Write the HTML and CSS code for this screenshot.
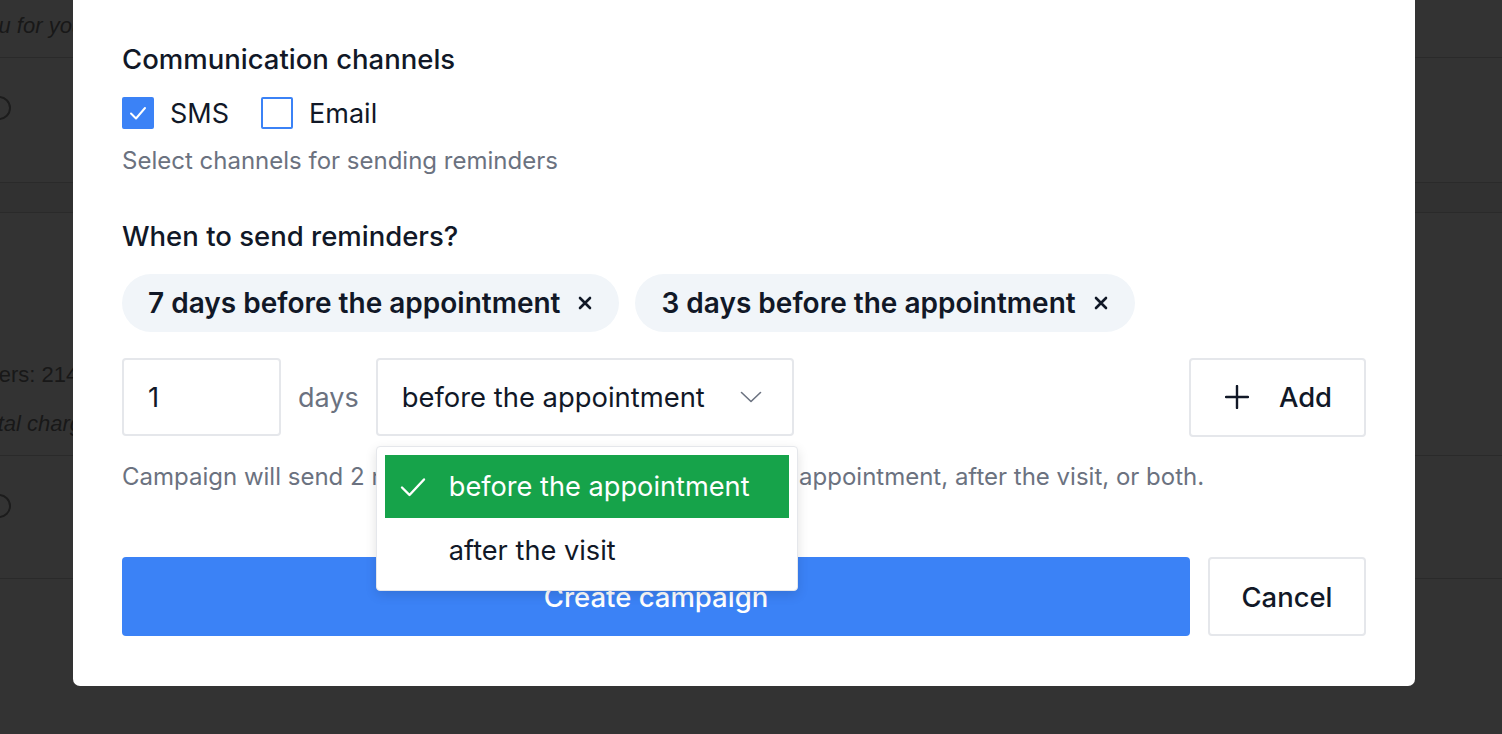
FILE: index.html
```html
<!DOCTYPE html>
<html lang="en">
<head>
  <meta charset="UTF-8">
  <meta name="viewport" content="width=device-width, initial-scale=1.0">
  <title>New reminder campaign</title>
  <link rel="stylesheet" href="styles.css">
</head>
<body>
  <!-- Page behind the modal -->
  <div class="page">
    <div class="row row-top">
      <p class="note shift-a">Thank you for your visit today</p>
    </div>
    <div class="row row-radio"><span class="radio"></span></div>
    <div class="row row-band"></div>
    <div class="row row-stats">
      <p class="stat shift-b">Reminders: 214</p>
      <p class="note shift-c">Total charge</p>
    </div>
    <div class="row row-radio2"><span class="radio"></span></div>
  </div>

  <div class="overlay">
    <div class="modal">
      <h2 class="label">Communication channels</h2>
      <div class="channels">
        <label class="check">
          <span class="box checked">
            <svg width="22" height="22" viewBox="0 0 22 22"><path d="M4 11.5l5 5L18 6" fill="none" stroke="#fff" stroke-width="2" stroke-linecap="round" stroke-linejoin="round"/></svg>
          </span>
          SMS
        </label>
        <label class="check">
          <span class="box"></span>
          Email
        </label>
      </div>
      <p class="hint hint-channels">Select channels for sending reminders</p>

      <h2 class="label label-when">When to send reminders?</h2>
      <div class="chips">
        <span class="chip">7 days before the appointment
          <svg class="chip-x" width="14" height="14" viewBox="0 0 14 14"><path d="M2 2l10 10M12 2L2 12" stroke="#111827" stroke-width="2.6" stroke-linecap="round"/></svg>
        </span>
        <span class="chip">3 days before the appointment
          <svg class="chip-x" width="14" height="14" viewBox="0 0 14 14"><path d="M2 2l10 10M12 2L2 12" stroke="#111827" stroke-width="2.6" stroke-linecap="round"/></svg>
        </span>
      </div>

      <div class="add-row">
        <div class="field field-days">1</div>
        <span class="unit">days</span>
        <div class="select-wrap">
          <div class="field field-select">
            before the appointment
            <svg width="22" height="12" viewBox="0 0 22 12"><path d="M1.5 1.5l9.5 9 9.5-9" fill="none" stroke="#6b7280" stroke-width="1.6" stroke-linecap="round" stroke-linejoin="round"/></svg>
          </div>
          <ul class="menu">
            <li class="menu-item active">
              <svg width="26" height="20" viewBox="0 0 26 20"><path d="M2 10.5l7.5 7.5L24 2.5" fill="none" stroke="#fff" stroke-width="2.4" stroke-linecap="round" stroke-linejoin="round"/></svg>
              before the appointment
            </li>
            <li class="menu-item">after the visit</li>
          </ul>
        </div>
        <button class="btn btn-add">
          <svg width="24" height="24" viewBox="0 0 24 24"><path d="M12 1v22M1 12h22" stroke="#111827" stroke-width="2.4" stroke-linecap="round"/></svg>
          Add
        </button>
      </div>
      <p class="hint hint-campaign">Campaign will send 2 reminders. Schedule them before the appointment, after the visit, or both.</p>

      <div class="actions">
        <button class="btn btn-primary">Create campaign</button>
        <button class="btn btn-cancel">Cancel</button>
      </div>
    </div>
  </div>
</body>
</html>
```

FILE: styles.css
```css
body {
  margin: 0;
  background-color: #fff;
  font-family: Inter, "Noto Sans", sans-serif;
  overflow: hidden;
  height: 734px;
}

/* page behind the overlay */
.page {
  width: 100%;
}

.row {
  border-bottom: 1px solid #cfcfcf;
  box-sizing: border-box;
}

.row p {
  margin: 0;
  color: #7a7a7a;
  font-family: "Liberation Sans", Arial, sans-serif;
  font-size: 22px;
  line-height: 28px;
  white-space: nowrap;
}

.row .note {
  font-style: italic;
}

.row-top {
  height: 58px;
  padding-top: 12px;
}

.row-radio {
  height: 125px;
  padding-top: 38px;
}

.row-band {
  height: 30px;
  background-color: #f4f4f4;
}

.row-stats {
  height: 243px;
  padding-top: 148px;
}

.row-stats .note {
  margin-top: 21px;
}

.row-radio2 {
  height: 123px;
  padding-top: 38px;
}

.radio {
  display: block;
  width: 20px;
  height: 20px;
  margin-left: -13px;
  border: 2px solid #8a8a8a;
  border-radius: 50%;
}

.shift-a { margin-left: -92px !important; }
.shift-b { margin-left: -77px !important; }
.shift-c { margin-left: -26px !important; }

/* modal */
.overlay {
  position: fixed;
  top: 0;
  left: 0;
  right: 0;
  bottom: 0;
  background-color: rgba(0, 0, 0, 0.8);
  display: flex;
  align-items: flex-end;
  padding: 0 0 48px 73px;
  overflow: hidden;
}

.modal {
  flex: none;
  width: 1342px;
  box-sizing: border-box;
  padding: 63px 49px 50px;
  background-color: #fff;
  border-radius: 7px;
  color: #111827;
}

.label {
  margin: 0;
  font-size: 27.5px;
  font-weight: 500;
  line-height: 32px;
}

.label-when {
  margin-top: 45px;
}

.channels {
  display: flex;
  gap: 32px;
  margin-top: 22px;
  height: 32px;
}

.check {
  display: flex;
  align-items: center;
  gap: 16px;
  font-size: 27px;
}

.box {
  width: 32px;
  height: 32px;
  box-sizing: border-box;
  border: 2px solid #3b82f6;
  border-radius: 2px;
  display: flex;
  align-items: center;
  justify-content: center;
}

.box.checked {
  background-color: #3b82f6;
}

.hint {
  margin: 0;
  color: #6b7280;
  font-size: 24px;
  line-height: 28px;
}

.hint-channels {
  margin-top: 18px;
}

.hint-campaign {
  margin-top: 27px;
  white-space: nowrap;
}

.chips {
  display: flex;
  gap: 16px;
  margin-top: 22px;
}

.chip {
  display: flex;
  align-items: center;
  gap: 18px;
  height: 58px;
  padding: 0 27px 0 26px;
  border-radius: 29px;
  background-color: #f1f5f9;
  font-size: 28px;
  font-weight: 600;
}

.add-row {
  display: flex;
  align-items: center;
  gap: 17px;
  margin-top: 26px;
  height: 78px;
}

.field {
  height: 78px;
  box-sizing: border-box;
  border: 2px solid #e5e7eb;
  border-radius: 4px;
  padding: 0 24px;
  display: flex;
  align-items: center;
  font-size: 27.4px;
}

.field-days {
  width: 159px;
}

.unit {
  color: #6b7280;
  font-size: 27px;
}

.select-wrap {
  position: relative;
}

.field-select {
  width: 418px;
  justify-content: space-between;
  padding-right: 30px;
}

.menu {
  position: absolute;
  top: 88px;
  left: 0;
  width: 422px;
  box-sizing: border-box;
  margin: 0;
  padding: 8px;
  list-style: none;
  background-color: #fff;
  border: 1px solid #e5e7eb;
  border-radius: 4px;
  box-shadow: 0 4px 12px rgba(0, 0, 0, 0.12);
  z-index: 2;
}

.menu-item {
  display: flex;
  align-items: center;
  gap: 23px;
  height: 64px;
  padding-left: 64px;
  font-size: 27.2px;
}

.menu-item.active {
  height: 63px;
  padding-left: 15px;
  background-color: #16a34a;
  color: #fff;
}

.btn {
  font-family: inherit;
  font-size: 27.4px;
  font-weight: 500;
  color: #111827;
  background-color: #fff;
  border: 2px solid #e5e7eb;
  border-radius: 4px;
  cursor: pointer;
  display: flex;
  align-items: center;
  justify-content: center;
}

.btn-add {
  margin-left: auto;
  width: 177px;
  height: 79px;
  gap: 30px;
  padding-left: 8px;
}

.actions {
  display: flex;
  gap: 18px;
  margin-top: 66px;
}

.btn-primary {
  flex: 1;
  height: 79px;
  border: none;
  background-color: #3b82f6;
  color: #fff;
  font-size: 27.5px;
}

.btn-cancel {
  width: 158px;
  height: 79px;
}
```
